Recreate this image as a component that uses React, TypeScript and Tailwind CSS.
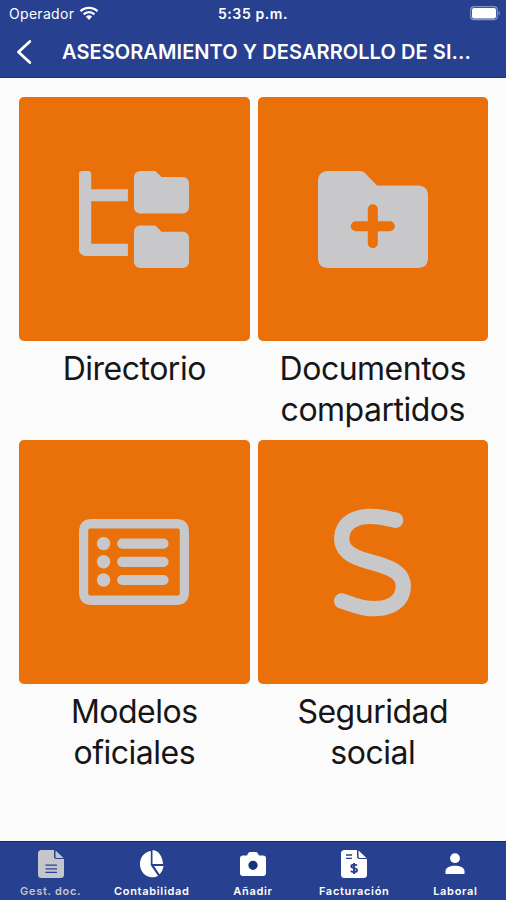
import type { ReactNode } from "react";
import { FaS } from "react-icons/fa6";

function WifiIcon() {
  return (
    <svg width="20" height="15" viewBox="0 0 20 15" fill="none" stroke="currentColor" strokeWidth="2.3">
      <path d="M1.5 5.2C6 .7 14 .7 18.500 5.200" />
      <path d="M4.600 8.300C7.600 5.400 12.400 5.400 15.400 8.300" />
      <path d="M6.900 10.500C8.600 8.900 11.400 8.900 13.100 10.500L10 14Z" fill="currentColor" stroke="none" />
    </svg>
  );
}

function BatteryIcon() {
  return (
    <svg width="31" height="15" viewBox="0 0 31 15">
      <rect x="0.700" y="0.700" width="26.600" height="13" rx="3.500" fill="none" stroke="#8795c4" strokeWidth="1.200" />
      <rect x="2" y="2" width="24" height="10.400" rx="2" fill="#fff" />
      <path d="M28.600 5v4.500c1.700-.6 1.700-3.900 0-4.500z" fill="#8795c4" />
    </svg>
  );
}

function FolderTreeIcon() {
  return (
    <svg width="110" height="97" viewBox="0 0 576 512" preserveAspectRatio="none" fill="currentColor">
      <path d="M64 16A16 16 0 0 0 48 0H16A16 16 0 0 0 0 16v400a32 32 0 0 0 32 32h224v-64H64V160h192V96H64z" />
      <path d="M544 32H432L400 0h-80a32 32 0 0 0-32 32v160a32 32 0 0 0 32 32h224a32 32 0 0 0 32-32V64a32 32 0 0 0-32-32z" />
      <path d="M544 320H432l-32-32h-80a32 32 0 0 0-32 32v160a32 32 0 0 0 32 32h224a32 32 0 0 0 32-32V352a32 32 0 0 0-32-32z" />
    </svg>
  );
}

function FolderPlusIcon() {
  return (
    <svg width="110" height="97" viewBox="0 0 110 97">
      <path
        d="M10 0H42Q45 0 47 2L59 14.500H99.500Q110 14.500 110 25V86.500Q110 97 99.500 97H10.500Q0 97 0 86.500V10.500Q0 0 10.500 0Z"
        fill="currentColor"
      />
      <path d="M54.800 38.200V72.200M37.800 55.200H71.800" stroke="#ea7009" strokeWidth="10" strokeLinecap="round" />
    </svg>
  );
}

function ListIcon() {
  return (
    <svg className="mb-0.5" width="110" height="86" viewBox="0 0 110 86" fill="currentColor">
      <path
        fillRule="evenodd"
        d="M13 0H97Q110 0 110 13V73Q110 86 97 86H13Q0 86 0 73V13Q0 0 13 0ZM11 9.500Q9.200 9.500 9.200 11.500V74.500Q9.200 76.500 11 76.500H99Q100.800 76.500 100.800 74.500V11.500Q100.800 9.500 99 9.500Z"
      />
      {[24.6, 42.8, 61].map((y) => (
        <g key={y}>
          <circle cx="24.600" cy={y} r="6.700" />
          <path d={`M43.200 ${y}H84.500`} stroke="currentColor" strokeWidth="10.200" strokeLinecap="round" />
        </g>
      ))}
    </svg>
  );
}

function DocIcon() {
  return (
    <svg width="26" height="28" viewBox="0 0 26 28">
      <path d="M3.500 0H16V6.500Q16 9 18.500 9H26V24.500Q26 28 22.500 28H3.500Q0 28 0 24.500V3.500Q0 0 3.500 0Z" fill="currentColor" />
      <path d="M17.500 .5L25.500 8H19Q17.500 8 17.500 6.500Z" fill="currentColor" />
      <path d="M7.500 15.200H19M7.500 18.800H19M7.500 22.300H19" stroke="#27408f" strokeWidth="1.300" />
    </svg>
  );
}

function PieIcon() {
  return (
    <svg width="24" height="28" viewBox="0 0 24 28" fill="currentColor">
      <path d="M10.800 1V15.300L18 25.700C15 27.500 12 27.700 9 26.800C3.500 25.200 0 20 0 14C0 7 4.500 2 10.800 1Z" />
      <path d="M12.500 0C18.500 .5 22.500 6 23 14H12.500Z" />
      <path d="M14 16H23.500C23 19.500 21.500 22.500 19.500 24.200Z" />
    </svg>
  );
}

function CameraIcon() {
  return (
    <svg width="26" height="24" viewBox="0 0 26 24">
      <path
        d="M3 3.500H7L8.200 1.200Q8.900 0 10.200 0H15.800Q17.100 0 17.800 1.200L19 3.500H23Q26 3.500 26 6.500V21Q26 24 23 24H3Q0 24 0 21V6.500Q0 3.500 3 3.500Z"
        fill="currentColor"
      />
      <circle cx="13" cy="13.300" r="4.600" fill="#17327f" />
    </svg>
  );
}

function InvoiceIcon() {
  return (
    <svg width="26" height="28" viewBox="0 0 26 28">
      <path d="M3.500 0H16V6.500Q16 9 18.500 9H26V24.500Q26 28 22.500 28H3.500Q0 28 0 24.500V3.500Q0 0 3.500 0Z" fill="currentColor" />
      <path d="M17.500 .5L25.500 8H19Q17.500 8 17.500 6.500Z" fill="currentColor" />
      <path d="M5 5H11M5 8.300H11" stroke="#27408f" strokeWidth="1.300" />
      <path
        d="M16 15.500C14.500 14.300 10.300 14.200 10.300 16.300C10.300 18.800 16 17.500 16 20.300C16 22.700 11.500 22.300 9.800 21M13 13V24"
        fill="none"
        stroke="#27408f"
        strokeWidth="1.900"
      />
    </svg>
  );
}

function PersonIcon() {
  return (
    <svg width="20" height="22" viewBox="0 0 20 22" fill="currentColor">
      <circle cx="10" cy="5.200" r="4.900" />
      <path d="M.5 21V18C.5 14.500 5.500 12.700 10 12.700S19.500 14.500 19.500 18V21Z" />
    </svg>
  );
}

function Tile({ icon, lines }: { icon: ReactNode; lines: string[] }) {
  return (
    <button className="flex h-[343px] flex-col text-center">
      <span className="flex h-[244px] w-full items-center justify-center rounded-[5px] bg-[#ea7009] pt-px text-[#c8c8ca]">
        {icon}
      </span>
      <span className="w-full pt-[7px] text-[32px] leading-[41px] tracking-[-0.5px] text-[#161616]">
        {lines.map((line) => (
          <span key={line} className="block">
            {line}
          </span>
        ))}
      </span>
    </button>
  );
}

function Tab({ icon, label, active }: { icon: ReactNode; label: string; active?: boolean }) {
  return (
    <button className={`flex flex-1 flex-col items-center pt-2 ${active ? "text-[#c4c6cb]" : "text-white"}`}>
      <span className="flex h-[28px] items-center justify-center">{icon}</span>
      <span className="mt-[6px] whitespace-nowrap text-[11px] font-semibold leading-[14px] tracking-[0.7px]">{label}</span>
    </button>
  );
}

export default function App() {
  return (
    <div className="flex h-[900px] w-[506px] flex-col overflow-hidden bg-[#fbfbfb] font-['Inter','Liberation_Sans',sans-serif]">
      <header className="h-[78px] border-b border-[#12308a] bg-[#27408f] text-white">
        <div className="grid h-[26px] grid-cols-3 items-center pl-[9px] pr-[5px] pt-px text-[14px]">
          <div className="flex items-center gap-[5px]">
            <span className="tracking-[0.3px]">Operador</span>
            <WifiIcon />
          </div>
          <span className="-ml-1 text-center font-semibold tracking-[0.6px]">5:35 p.m.</span>
          <span className="flex justify-end">
            <BatteryIcon />
          </span>
        </div>
        <div className="flex h-[51px] items-center pl-4">
          <svg width="16" height="24" viewBox="0 0 16 24" fill="none" stroke="currentColor" strokeWidth="2.800">
            <path d="M13.800 1.500L2.500 12L13.800 22.500" strokeLinecap="round" strokeLinejoin="round" />
          </svg>
          <h1 className="ml-[30px] whitespace-nowrap pt-px text-[20px] font-semibold tracking-[0.08px]">
            ASESORAMIENTO Y DESARROLLO DE SI...
          </h1>
        </div>
      </header>
      <main className="grid flex-1 grid-cols-2 content-start gap-x-2 pl-[19px] pr-[18px] pt-[19px]">
        <Tile icon={<FolderTreeIcon />} lines={["Directorio"]} />
        <Tile icon={<FolderPlusIcon />} lines={["Documentos", "compartidos"]} />
        <Tile icon={<ListIcon />} lines={["Modelos", "oficiales"]} />
        <Tile icon={<FaS size={123} />} lines={["Seguridad", "social"]} />
      </main>
      <nav className="flex h-[59px] border-t border-[#0f2a80] bg-[#27408f]">
        <Tab active icon={<DocIcon />} label="Gest. doc." />
        <Tab icon={<PieIcon />} label="Contabilidad" />
        <Tab icon={<CameraIcon />} label="Añadir" />
        <Tab icon={<InvoiceIcon />} label="Facturación" />
        <Tab icon={<PersonIcon />} label="Laboral" />
      </nav>
    </div>
  );
}
